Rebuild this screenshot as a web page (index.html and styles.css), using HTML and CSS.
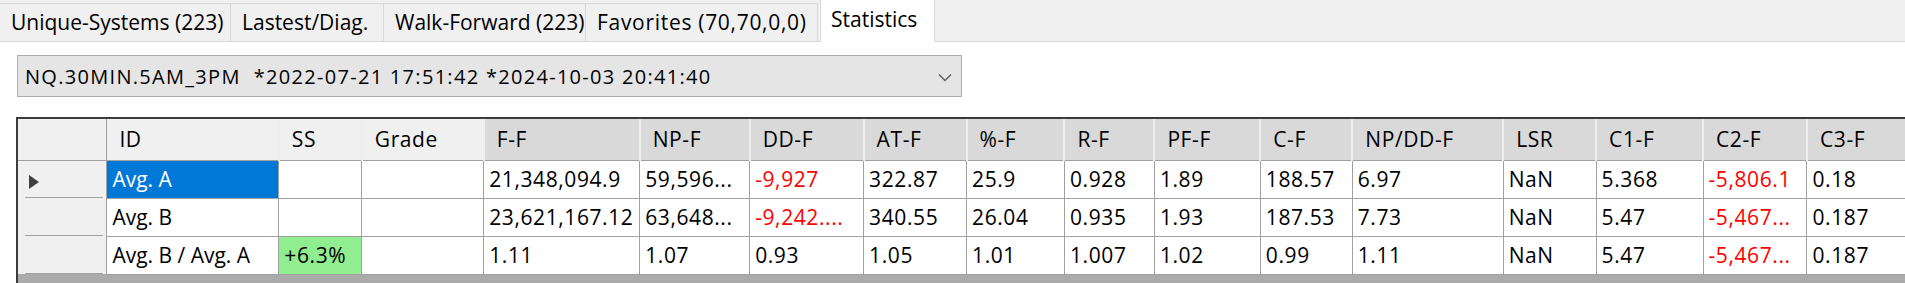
FILE: index.html
```html
<!DOCTYPE html>
<html lang="en">

<head>
  <meta charset="UTF-8">
  <title>Statistics</title>
  <link rel="stylesheet" href="styles.css">
</head>

<body>
  <div class="tab-bar">
    <div class="tab t1">Unique-Systems (223)</div>
    <div class="tab t2">Lastest/Diag.</div>
    <div class="tab t3">Walk-Forward (223)</div>
    <div class="tab t4">Favorites (70,70,0,0)</div>
    <div class="tab active">Statistics</div>
  </div>

  <div class="panel">
    <div class="combo">
      <span>NQ.30MIN.5AM_3PM&nbsp; *2022-07-21 17:51:42 *2024-10-03 20:41:40</span>
      <svg class="chevron" width="14" height="9" viewBox="0 0 14 9">
        <path d="M1 1.5 L7 7.5 L13 1.5" fill="none" stroke="#606060" stroke-width="1.5" />
      </svg>
    </div>

    <div class="grid">
      <table>
        <colgroup>
          <col style="width:89px">
          <col style="width:172px">
          <col style="width:83px">
          <col style="width:122px">
          <col style="width:156px">
          <col style="width:110px">
          <col style="width:114px">
          <col style="width:103px">
          <col style="width:98px">
          <col style="width:90px">
          <col style="width:106px">
          <col style="width:92px">
          <col style="width:151px">
          <col style="width:93px">
          <col style="width:107px">
          <col style="width:104px">
          <col style="width:110px">
        </colgroup>
        <thead>
          <tr>
            <th class="corner"></th>
            <th class="light">ID</th>
            <th class="light">SS</th>
            <th class="light">Grade</th>
            <th>F-F</th>
            <th>NP-F</th>
            <th>DD-F</th>
            <th>AT-F</th>
            <th>%-F</th>
            <th>R-F</th>
            <th>PF-F</th>
            <th>C-F</th>
            <th>NP/DD-F</th>
            <th>LSR</th>
            <th>C1-F</th>
            <th>C2-F</th>
            <th>C3-F</th>
          </tr>
        </thead>
        <tbody>
          <tr>
            <td class="row-head"><span class="current"></span></td>
            <td class="selected">Avg. A</td>
            <td></td>
            <td></td>
            <td>21,348,094.9</td>
            <td>59,596...</td>
            <td class="neg">-9,927</td>
            <td>322.87</td>
            <td>25.9</td>
            <td>0.928</td>
            <td>1.89</td>
            <td>188.57</td>
            <td>6.97</td>
            <td>NaN</td>
            <td>5.368</td>
            <td class="neg">-5,806.1</td>
            <td>0.18</td>
          </tr>
          <tr>
            <td class="row-head"></td>
            <td>Avg. B</td>
            <td></td>
            <td></td>
            <td>23,621,167.12</td>
            <td>63,648...</td>
            <td class="neg">-9,242....</td>
            <td>340.55</td>
            <td>26.04</td>
            <td>0.935</td>
            <td>1.93</td>
            <td>187.53</td>
            <td>7.73</td>
            <td>NaN</td>
            <td>5.47</td>
            <td class="neg">-5,467...</td>
            <td>0.187</td>
          </tr>
          <tr>
            <td class="row-head"></td>
            <td>Avg. B / Avg. A</td>
            <td class="good">+6.3%</td>
            <td></td>
            <td>1.11</td>
            <td>1.07</td>
            <td>0.93</td>
            <td>1.05</td>
            <td>1.01</td>
            <td>1.007</td>
            <td>1.02</td>
            <td>0.99</td>
            <td>1.11</td>
            <td>NaN</td>
            <td>5.47</td>
            <td class="neg">-5,467...</td>
            <td>0.187</td>
          </tr>
        </tbody>
      </table>
    </div>
  </div>
</body>

</html>
```

FILE: styles.css
```css
body {
  margin: 0;
  width: 1905px;
  height: 283px;
  overflow: hidden;
  background: #ffffff;
  font-family: "Open Sans", "Noto Sans", sans-serif;
  color: #000000;
}

.tab-bar {
  display: flex;
  align-items: flex-end;
  height: 41px;
  background: #f0f0f0;
  border-bottom: 1px solid #d9d9d9;
}

.tab {
  box-sizing: border-box;
  height: 38px;
  padding: 0 0 0 11px;
  line-height: 36px;
  font-size: 21px;
  background: #f0f0f0;
  border: 1px solid #d9d9d9;
  border-bottom: none;
  border-left: none;
  white-space: nowrap;
}

.tab.t1 { width: 231px; }
.tab.t2 { width: 153px; }
.tab.t3 { width: 202px; }
.tab.t4 { width: 232px; letter-spacing: 0.7px; }

.tab.active {
  width: 115px;
  height: 43px;
  margin-left: 2px;
  margin-bottom: -1px;
  padding-left: 10px;
  line-height: 38px;
  background: #ffffff;
  border-left: 1px solid #d9d9d9;
}

.panel {
  padding: 13px 0 0 17px;
}

.combo {
  box-sizing: border-box;
  display: flex;
  align-items: center;
  justify-content: space-between;
  width: 945px;
  height: 42px;
  padding: 0 9px 0 7px;
  background: #e5e5e5;
  border: 1px solid #adadad;
  font-size: 20px;
  letter-spacing: 1.3px;
  white-space: pre;
}

.chevron {
  margin-top: 2px;
}

.grid {
  margin: 20px 0 0 -1px;
  width: 1900px;
  height: 164px;
  overflow: hidden;
  background: #ababab;
  border-top: 2px solid #3c3c3c;
  border-left: 2px solid #3c3c3c;
}

table {
  table-layout: fixed;
  border-collapse: collapse;
  font-size: 21px;
}

th,
td {
  box-sizing: border-box;
  padding: 0 0 0 5px;
  text-align: left;
  white-space: nowrap;
  overflow: hidden;
  font-weight: normal;
}

th {
  height: 41px;
  padding-left: 12px;
  letter-spacing: 0.6px;
  background: #d9d9d9;
  border-right: 2px solid #eeeeee;
  border-bottom: 1px solid #a0a0a0;
}

th.light,
th.corner {
  background: #f0f0f0;
}

th.corner {
  border-right: 1px solid #a0a0a0;
}

td {
  height: 38px;
  background: #ffffff;
  border-right: 1px solid #a0a0a0;
  border-bottom: 1px solid #a0a0a0;
}

td:nth-child(n+3) {
  letter-spacing: 0.6px;
}

td.row-head {
  position: relative;
  background: #f0f0f0;
  border-bottom: none;
}

td.row-head::after {
  content: "";
  position: absolute;
  left: 7px;
  right: 3px;
  bottom: 0;
  border-bottom: 1px solid #a0a0a0;
}

.current {
  display: inline-block;
  margin-left: 6px;
  vertical-align: middle;
  border-left: 10px solid #404040;
  border-top: 7px solid transparent;
  border-bottom: 7px solid transparent;
}

td.selected {
  background: #0078d7;
  color: #ffffff;
}

td.good {
  background: #90ee90;
}

td.neg {
  color: #ff0000;
}
```
